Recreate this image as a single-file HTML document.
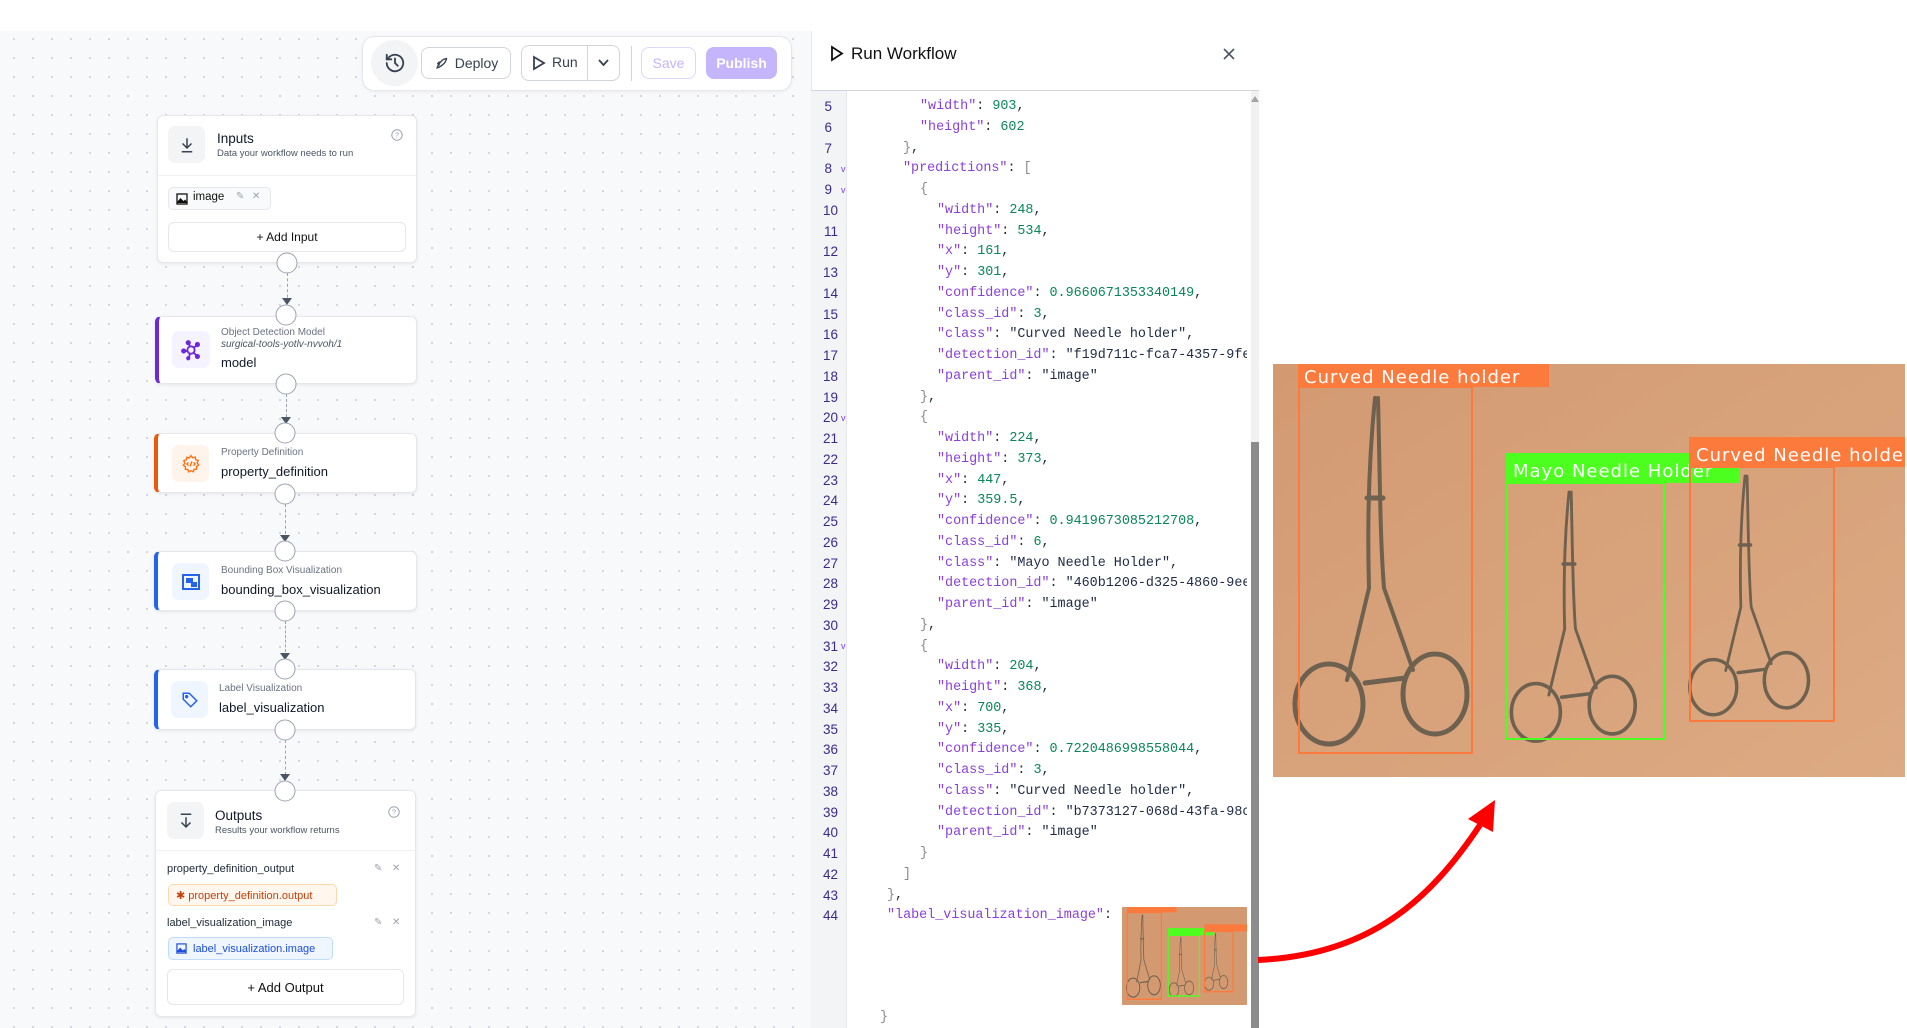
<!DOCTYPE html>
<html><head><meta charset="utf-8">
<style>
*{margin:0;padding:0;box-sizing:border-box}
body{width:1907px;height:1028px;overflow:hidden;background:#fff;font-family:"Liberation Sans",sans-serif;position:relative;color:#111827}
.abs{position:absolute}
#canvas{left:0;top:31px;width:812px;height:997px;background-color:#f8f9fb;background-image:radial-gradient(circle,#ccd1d8 0.9px,transparent 1.2px);background-size:19px 19px;background-position:4.5px -1.5px}
.card{position:absolute;background:#fff;border:1px solid #e5e7eb;border-radius:6px;box-shadow:0 1px 3px rgba(0,0,0,.08)}
.bar{border-left-width:4px}
.circ{position:absolute;width:21px;height:21px;border-radius:50%;background:#fff;border:1.3px solid #9ca3af;transform:translate(-50%,-50%)}
.dash{position:absolute;width:0;border-left:1.3px dashed #9ca3af}
.tri{position:absolute;width:0;height:0;border-left:5px solid transparent;border-right:5px solid transparent;border-top:7px solid #4b5563;transform:translateX(-50%)}
.ibox{position:absolute;border-radius:7px;display:flex;align-items:center;justify-content:center}
.sm{position:absolute;font-size:10px;color:#6b7280;white-space:nowrap;line-height:12px}
.nm{position:absolute;font-size:13px;color:#111827;font-weight:500;white-space:nowrap;line-height:16px}
.btn{position:absolute;border:1px solid #d1d5db;border-radius:8px;background:#fff;display:flex;align-items:center;justify-content:center;font-size:14px;color:#374151}
.code{position:absolute;font-family:"Liberation Mono",monospace;font-size:13.4px;white-space:pre;line-height:16px}
.k{color:#8b3fd9}.n{color:#098658}.s{color:#1f2a44}.p{color:#1f2937}.b{color:#8a8a8a}
.ln{position:absolute;font-family:"Liberation Sans",sans-serif;font-size:13.5px;color:#3b2a8c;width:26px;text-align:right;line-height:16px}
.fold{position:absolute;font-size:9px;color:#7c3aed;left:841px}
</style></head><body>
<div id="canvas" class="abs"></div>

<!-- toolbar -->
<div class="abs" style="left:362px;top:36px;width:430px;height:55px;background:#fff;border:1px solid #e5e7eb;border-radius:12px;box-shadow:0 1px 3px rgba(0,0,0,.06)"></div>
<div class="abs" style="left:371px;top:40px;width:47px;height:46px;border-radius:50%;background:#f3f4f6"></div>
<svg class="abs" style="left:384px;top:52px" width="22" height="22" viewBox="0 0 24 24" fill="none" stroke="#374151" stroke-width="2" stroke-linecap="round"><path d="M3 12a9 9 0 1 0 3-6.7L3 8"/><path d="M3 3v5h5"/><path d="M12 7v5l3 3"/></svg>
<div class="btn" style="left:421px;top:47px;width:90px;height:32px"><svg width="15" height="15" viewBox="0 0 24 24" fill="none" stroke="#374151" stroke-width="2.2"><path d="M5 19c1-4 3-7 7-11 3-3 7-4 8-4 0 1-1 5-4 8-4 4-7 6-11 7z"/><path d="M9 15l-3-3 3-3"/></svg><span style="margin-left:6px">Deploy</span></div>
<div class="btn" style="left:521px;top:45px;width:99px;height:36px"></div>
<div class="abs" style="left:587px;top:46px;width:1px;height:34px;background:#d1d5db"></div>
<svg class="abs" style="left:532px;top:55px" width="14" height="16" viewBox="0 0 14 16" fill="none" stroke="#374151" stroke-width="1.8"><path d="M2 2l10 6-10 6z"/></svg>
<div class="abs" style="left:552px;top:54px;font-size:14px;color:#374151">Run</div>
<svg class="abs" style="left:597px;top:58px" width="13" height="10" viewBox="0 0 13 10" fill="none" stroke="#374151" stroke-width="1.8"><path d="M2 2l4.5 5 4.5-5"/></svg>
<div class="abs" style="left:631px;top:46px;width:1px;height:35px;background:#d1d5db"></div>
<div class="btn" style="left:641px;top:47px;width:55px;height:32px;border-color:#ddd6fe;color:#c4b5fd">Save</div>
<div class="btn" style="left:706px;top:47px;width:71px;height:32px;border:none;background:#c4b5fd;color:#fff;font-weight:bold">Publish</div>

<!-- Inputs card -->
<div class="card" style="left:157px;top:115px;width:260px;height:148px"></div>
<div class="ibox" style="left:168px;top:126px;width:37px;height:37px;background:#f3f4f6"><svg width="18" height="18" viewBox="0 0 24 24" fill="none" stroke="#374151" stroke-width="2"><path d="M12 3v12M6 10l6 6 6-6M5 21h14"/></svg></div>
<div class="abs" style="left:217px;top:131px;font-size:13.5px;font-weight:500">Inputs</div>
<div class="sm" style="left:217px;top:148px;font-size:9.5px;color:#4b5563">Data your workflow needs to run</div>
<svg class="abs" style="left:391px;top:129px" width="12" height="12" viewBox="0 0 12 12"><circle cx="6" cy="6" r="5.2" fill="none" stroke="#9ca3af"/><text x="6" y="8.7" font-size="7.5" text-anchor="middle" fill="#9ca3af" font-family="Liberation Sans">?</text></svg>
<div class="abs" style="left:158px;top:175px;width:258px;height:1px;background:#f0f1f3"></div>
<div class="abs" style="left:168px;top:187px;width:103px;height:23px;border:1px solid #e5e7eb;border-radius:5px;background:#f9fafb"></div>
<svg class="abs" style="left:176px;top:193px" width="12" height="12" viewBox="0 0 12 12" fill="none" stroke="#111" stroke-width="1.3"><rect x="1" y="1" width="10" height="10"/><path d="M1 10l3.5-4 3 3 1.5-1.5L11 10" fill="#111"/></svg>
<div class="abs" style="left:193px;top:191px;font-size:11.5px;color:#111">image</div>
<div class="abs" style="left:236px;top:191px;font-size:10px;color:#9ca3af">✎</div>
<div class="abs" style="left:252px;top:191px;font-size:10px;color:#9ca3af">✕</div>
<div class="btn" style="left:168px;top:222px;width:238px;height:30px;border-color:#e5e7eb;border-radius:6px;font-size:12px;color:#111">+ Add Input</div>

<!-- model card -->
<div class="card bar" style="left:155px;top:316px;width:262px;height:68px;border-left-color:#6d28d9"></div>
<div class="ibox" style="left:172px;top:331px;width:38px;height:37px;background:#f5f3ff"><svg width="22" height="22" viewBox="0 0 24 24" fill="none" stroke="#6d28d9" stroke-width="2"><circle cx="12" cy="12" r="4"/><circle cx="4" cy="13" r="1.8" fill="#6d28d9"/><circle cx="9" cy="4" r="1.8" fill="#6d28d9"/><circle cx="19" cy="6" r="1.8" fill="#6d28d9"/><circle cx="19" cy="19" r="1.8" fill="#6d28d9"/><circle cx="9" cy="21" r="1.3" fill="#6d28d9"/><path d="M5.8 13H8M10 5.8l.8 2.5M17.5 7.5l-2.5 2M17.6 17.6L15 15M10 19.5l.7-3.5"/></svg></div>
<div class="sm" style="left:221px;top:327px">Object Detection Model</div>
<div class="sm" style="left:221px;top:339px;font-style:italic;color:#4b5563">surgical-tools-yotlv-nvvoh/1</div>
<div class="nm" style="left:221px;top:355px">model</div>

<!-- property card -->
<div class="card bar" style="left:154px;top:433px;width:263px;height:60px;border-left-color:#ea580c"></div>
<div class="ibox" style="left:172px;top:445px;width:37px;height:37px;background:#fff4ec"><svg width="20" height="20" viewBox="0 0 24 24" fill="none" stroke="#f97316" stroke-width="1.7"><path d="M12 2l2 2.5 3-.8.6 3.1 3 1-1.2 2.9 1.8 2.5-2.6 1.8.2 3.1-3.1.3-1.2 2.9L12 20l-2.5 1.6-1.2-2.9-3.1-.3.2-3.1L2.8 13.5l1.8-2.5L3.4 8l3-1 .6-3.1 3 .8z"/><path d="M9 10l-2 2 2 2M15 10l2 2-2 2M13 9l-2 6"/></svg></div>
<div class="sm" style="left:221px;top:447px">Property Definition</div>
<div class="nm" style="left:221px;top:464px">property_definition</div>

<!-- bbox card -->
<div class="card bar" style="left:154px;top:551px;width:263px;height:60px;border-left-color:#2563eb"></div>
<div class="ibox" style="left:172px;top:563px;width:37px;height:37px;background:#eff6ff"><svg width="18" height="16" viewBox="0 0 18 16"><rect x="1" y="1" width="16" height="14" fill="none" stroke="#2563eb" stroke-width="2"/><rect x="4" y="4" width="7" height="5" fill="#2563eb"/><rect x="9" y="8" width="6" height="5" fill="#2563eb"/></svg></div>
<div class="sm" style="left:221px;top:565px">Bounding Box Visualization</div>
<div class="nm" style="left:221px;top:582px">bounding_box_visualization</div>

<!-- label card -->
<div class="card bar" style="left:154px;top:669px;width:262px;height:61px;border-left-color:#2563eb"></div>
<div class="ibox" style="left:171px;top:681px;width:37px;height:37px;background:#eff6ff"><svg width="18" height="18" viewBox="0 0 24 24" fill="none" stroke="#2563eb" stroke-width="2"><path d="M3 3h8l10 10-8 8L3 11z"/><circle cx="7.5" cy="7.5" r="1.3" fill="#2563eb"/></svg></div>
<div class="sm" style="left:219px;top:683px">Label Visualization</div>
<div class="nm" style="left:219px;top:700px">label_visualization</div>

<!-- outputs card -->
<div class="card" style="left:155px;top:790px;width:261px;height:227px"></div>
<div class="ibox" style="left:167px;top:802px;width:37px;height:37px;background:#f3f4f6"><svg width="18" height="18" viewBox="0 0 24 24" fill="none" stroke="#374151" stroke-width="2"><path d="M5 3h14M12 7v13M6 14l6 6 6-6"/></svg></div>
<div class="abs" style="left:215px;top:808px;font-size:13.5px;font-weight:500">Outputs</div>
<div class="sm" style="left:215px;top:825px;font-size:9.5px;color:#4b5563">Results your workflow returns</div>
<svg class="abs" style="left:388px;top:806px" width="12" height="12" viewBox="0 0 12 12"><circle cx="6" cy="6" r="5.2" fill="none" stroke="#9ca3af"/><text x="6" y="8.7" font-size="7.5" text-anchor="middle" fill="#9ca3af" font-family="Liberation Sans">?</text></svg>
<div class="abs" style="left:156px;top:850px;width:259px;height:1px;background:#f0f1f3"></div>
<div class="abs" style="left:167px;top:863px;font-size:11px;color:#1f2937">property_definition_output</div>
<div class="abs" style="left:374px;top:863px;font-size:10px;color:#9ca3af">✎</div>
<div class="abs" style="left:392px;top:863px;font-size:10px;color:#9ca3af">✕</div>
<div class="abs" style="left:168px;top:884px;width:169px;height:22px;background:#fff7ed;border:1px solid #fed7aa;border-radius:5px;font-size:11px;color:#c2410c;padding:4px 0 0 7px">✱ property_definition.output</div>
<div class="abs" style="left:167px;top:917px;font-size:11px;color:#1f2937">label_visualization_image</div>
<div class="abs" style="left:374px;top:917px;font-size:10px;color:#9ca3af">✎</div>
<div class="abs" style="left:392px;top:917px;font-size:10px;color:#9ca3af">✕</div>
<div class="abs" style="left:168px;top:937px;width:165px;height:23px;background:#eff6ff;border:1px solid #bfdbfe;border-radius:5px;font-size:11px;color:#1d4ed8;padding:5px 0 0 24px">label_visualization.image</div>
<svg class="abs" style="left:176px;top:943px" width="11" height="11" viewBox="0 0 12 12" fill="none" stroke="#1d4ed8" stroke-width="1.3"><rect x="1" y="1" width="10" height="10"/><path d="M1 10l3.5-4 3 3 1.5-1.5L11 10" fill="#1d4ed8"/></svg>
<div class="btn" style="left:167px;top:969px;width:237px;height:36px;border-color:#e5e7eb;border-radius:6px;font-size:13px;color:#111">+ Add Output</div>

<!-- edges -->
<div class="dash" style="left:287px;top:273px;height:30px"></div><div class="tri" style="left:287px;top:298px"></div>
<div class="dash" style="left:286px;top:394px;height:28px"></div><div class="tri" style="left:286px;top:417px"></div>
<div class="dash" style="left:285px;top:504px;height:30px"></div><div class="tri" style="left:285px;top:535px"></div>
<div class="dash" style="left:285px;top:621px;height:31px"></div><div class="tri" style="left:285px;top:653px"></div>
<div class="dash" style="left:285px;top:740px;height:35px"></div><div class="tri" style="left:285px;top:774px"></div>
<div class="circ" style="left:287px;top:263px"></div>
<div class="circ" style="left:286px;top:315px"></div>
<div class="circ" style="left:286px;top:384px"></div>
<div class="circ" style="left:285px;top:433px"></div>
<div class="circ" style="left:285px;top:494px"></div>
<div class="circ" style="left:285px;top:551px"></div>
<div class="circ" style="left:285px;top:611px"></div>
<div class="circ" style="left:285px;top:669px"></div>
<div class="circ" style="left:285px;top:730px"></div>
<div class="circ" style="left:285px;top:791px"></div>

<!-- right panel -->
<div class="abs" style="left:811px;top:31px;width:451px;height:997px;background:#fff;border-left:1px solid #e5e7eb"></div>
<svg class="abs" style="left:830px;top:45px" width="14" height="17" viewBox="0 0 14 17" fill="none" stroke="#111" stroke-width="1.8"><path d="M2 2l10 6.5-10 6.5z"/></svg>
<div class="abs" style="left:851px;top:44px;font-size:17px;color:#111">Run Workflow</div>
<svg class="abs" style="left:1222px;top:47px" width="14" height="14" viewBox="0 0 14 14" stroke="#4b5563" stroke-width="1.6"><path d="M2 2l10 10M12 2L2 12"/></svg>
<div class="abs" style="left:811px;top:90px;width:448px;height:1px;background:#d1d5db"></div>
<div class="abs" style="left:811px;top:91px;width:36px;height:937px;background:#f3f4f6;border-right:1px solid #e5e7eb"></div>
<div class="abs" style="left:1251px;top:91px;width:8px;height:937px;background:#f1f1f1"></div>
<div class="abs" style="left:1251px;top:442px;width:8px;height:586px;background:#8c8c8c"></div>
<div class="tri" style="left:1255px;top:96px;border-top:none;border-bottom:6px solid #a3a3a3;border-left-width:4px;border-right-width:4px"></div>

<div id="code" class="abs" style="left:0;top:0;width:1250px;height:1028px;overflow:hidden;clip-path:inset(91px 0 0 0)">
<div class="fold" style="top:82px">v</div>
<div class="fold" style="top:164px">v</div>
<div class="fold" style="top:185px">v</div>
<div class="fold" style="top:413px">v</div>
<div class="fold" style="top:641px">v</div>
<div class="code" style="left:903px;top:78px"><span class="k">"image"</span><span class="p">: </span><span class="b">{</span></div>
</div>

<!-- big image -->
<svg class="abs" style="left:1273px;top:364px" width="632" height="413" viewBox="0 0 632 413">
<defs>
<linearGradient id="bg" x1="0" y1="0" x2="1" y2="1"><stop offset="0" stop-color="#d39a72"/><stop offset="1" stop-color="#dcaa83"/></linearGradient>
<g id="fc" fill="none" stroke="#6e6150" stroke-linecap="round">
<path d="M0,0 C-6,60 -8,120 -6,190 L-28,282" stroke-width="4"/>
<path d="M3,0 C5,80 5,140 9,190 L38,272" stroke-width="4"/>
<path d="M-8,100 L8,100 M-10,285 L30,280" stroke-width="5"/>
<ellipse cx="-46" cy="306" rx="34" ry="40" stroke-width="5"/>
<ellipse cx="60" cy="296" rx="32" ry="40" stroke-width="5"/>
</g>
</defs>
<rect width="632" height="413" fill="url(#bg)"/>
<use href="#fc" transform="translate(102,34)"/>
<use href="#fc" transform="translate(296,128) scale(0.72)"/>
<use href="#fc" transform="translate(472,112) scale(0.69)"/>
<rect x="26" y="23" width="173" height="366" fill="none" stroke="#fb7a3c" stroke-width="2"/>
<rect x="25" y="0" width="251" height="23" fill="#fb7a3c"/>
<text x="31" y="19" font-family="DejaVu Sans" font-size="18" fill="#fff" letter-spacing="1">Curved Needle holder</text>
<rect x="234" y="119" width="157" height="256" fill="none" stroke="#4cff1f" stroke-width="2"/>
<rect x="233" y="89" width="234" height="30" fill="#4cff1f"/>
<text x="240" y="113" font-family="DejaVu Sans" font-size="18" fill="#fff" letter-spacing="1">Mayo Needle Holder</text>
<rect x="417" y="103" width="144" height="254" fill="none" stroke="#fb7a3c" stroke-width="2"/>
<rect x="416" y="73" width="216" height="30" fill="#fb7a3c"/>
<text x="423" y="97" font-family="DejaVu Sans" font-size="18" fill="#fff" letter-spacing="1">Curved Needle holder</text>
</svg>

<!-- thumbnail -->
<svg class="abs" style="left:1122px;top:907px" width="125" height="98" viewBox="0 0 632 413" preserveAspectRatio="none">
<rect width="632" height="413" fill="#d39a72"/>
<use href="#fc" transform="translate(102,34)"/>
<use href="#fc" transform="translate(296,128) scale(0.72)"/>
<use href="#fc" transform="translate(472,112) scale(0.69)"/>
<rect x="26" y="23" width="173" height="366" fill="none" stroke="#fb7a3c" stroke-width="6"/>
<rect x="25" y="0" width="251" height="23" fill="#fb7a3c"/>
<rect x="234" y="119" width="157" height="256" fill="none" stroke="#4cff1f" stroke-width="6"/>
<rect x="233" y="89" width="234" height="30" fill="#4cff1f"/>
<rect x="417" y="103" width="144" height="254" fill="none" stroke="#fb7a3c" stroke-width="6"/>
<rect x="416" y="73" width="216" height="30" fill="#fb7a3c"/>
</svg>

<!-- red arrow -->
<svg class="abs" style="left:1250px;top:780px" width="270" height="200" viewBox="1250 780 270 200">
<path d="M1258,960 C1370,955 1430,900 1480,825" fill="none" stroke="#ff0000" stroke-width="6"/>
<path d="M1495,800 L1468,819 L1493,832 Z" fill="#ff0000"/>
</svg>

<script>
(function(){
var d={1:887,2:903,3:920,4:937};
var L=[
[5,3,'<span class="k">"width"</span><span class="p">: </span><span class="n">903</span><span class="p">,</span>'],
[6,3,'<span class="k">"height"</span><span class="p">: </span><span class="n">602</span>'],
[7,2,'<span class="b">}</span><span class="p">,</span>'],
[8,2,'<span class="k">"predictions"</span><span class="p">: </span><span class="b">[</span>'],
[9,3,'<span class="b">{</span>']];
function blk(s,w,h,x,y,c,cid,id){return [
[s,4,'<span class="k">"width"</span><span class="p">: </span><span class="n">'+w+'</span><span class="p">,</span>'],
[s+1,4,'<span class="k">"height"</span><span class="p">: </span><span class="n">'+h+'</span><span class="p">,</span>'],
[s+2,4,'<span class="k">"x"</span><span class="p">: </span><span class="n">'+x+'</span><span class="p">,</span>'],
[s+3,4,'<span class="k">"y"</span><span class="p">: </span><span class="n">'+y+'</span><span class="p">,</span>'],
[s+4,4,'<span class="k">"confidence"</span><span class="p">: </span><span class="n">'+c+'</span><span class="p">,</span>'],
[s+5,4,'<span class="k">"class_id"</span><span class="p">: </span><span class="n">'+cid+'</span><span class="p">,</span>'],
[s+6,4,'<span class="k">"class"</span><span class="p">: </span><span class="s">"'+(cid==6?'Mayo Needle Holder':'Curved Needle holder')+'"</span><span class="p">,</span>'],
[s+7,4,'<span class="k">"detection_id"</span><span class="p">: </span><span class="s">"'+id+'</span>'],
[s+8,4,'<span class="k">"parent_id"</span><span class="p">: </span><span class="s">"image"</span>']];}
L=L.concat(blk(10,248,534,161,301,'0.9660671353340149',3,'f19d711c-fca7-4357-9fe2'));
L.push([19,3,'<span class="b">}</span><span class="p">,</span>'],[20,3,'<span class="b">{</span>']);
L=L.concat(blk(21,224,373,447,'359.5','0.9419673085212708',6,'460b1206-d325-4860-9ee1'));
L.push([30,3,'<span class="b">}</span><span class="p">,</span>'],[31,3,'<span class="b">{</span>']);
L=L.concat(blk(32,204,368,700,335,'0.7220486998558044',3,'b7373127-068d-43fa-98c1'));
L.push([41,3,'<span class="b">}</span>'],[42,2,'<span class="b">]</span>'],[43,1,'<span class="b">}</span><span class="p">,</span>'],[44,1,'<span class="k">"label_visualization_image"</span><span class="p">:</span>']);
var c=document.getElementById('code'),h='';
for(var i=0;i<L.length;i++){var n=L[i][0],y=107+(n-5)*20.75-8;
h+='<div class="code" style="left:'+d[L[i][1]]+'px;top:'+y+'px">'+L[i][2]+'</div>';}
c.insertAdjacentHTML('beforeend',h);
var g='';for(var n=4;n<=44;n++){var y=107+(n-5)*20.75-8;g+='<div class="ln" style="left:'+(n<10?806:812)+'px;top:'+y+'px">'+n+'</div>';}
c.insertAdjacentHTML('afterbegin',g);
c.insertAdjacentHTML('beforeend','<div class="code" style="left:880px;top:1010px"><span class="b">}</span></div>');
})();
</script>
<div class="abs" style="left:1247px;top:91px;width:4px;height:937px;background:#fff"></div>
</body></html>
